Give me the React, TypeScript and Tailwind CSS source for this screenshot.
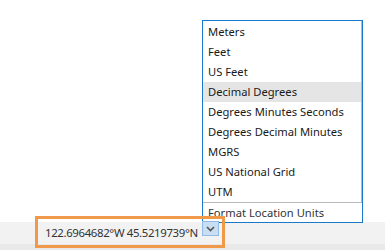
import React from "react";

const items = [
  "Meters",
  "Feet",
  "US Feet",
  "Decimal Degrees",
  "Degrees Minutes Seconds",
  "Degrees Decimal Minutes",
  "MGRS",
  "US National Grid",
  "UTM",
];

export default function App() {
  return (
    <div className="relative w-[385px] h-[250px] overflow-hidden bg-white flex flex-col font-['Noto_Sans',sans-serif]">
      <div className="flex-1" />
      <div className="relative h-[28px] bg-[#f2f2f2] border-b-[6px] border-[#e9e9e9] flex items-start pl-[35px]">
        <div className="relative z-10 -mt-[6px] h-[32px] w-[190px] border-[3px] border-[#f0994a] flex items-start">
          <span className="mt-[5px] pl-[7px] text-[11.4px] tracking-[-0.35px] leading-[18px] text-[#333] whitespace-nowrap">
            122.6964682°W 45.5219739°N
          </span>
          <div className="ml-auto shrink-0 mr-[3px] mt-[2px] h-[15px] w-[17px] border border-[#8fbbe6] bg-[#c9def3] flex items-center justify-center">
            <svg width="9" height="6" viewBox="0 0 9 6">
              <path d="M1 1 L4.5 4.5 L8 1" stroke="#555" strokeWidth="1.6" fill="none" />
            </svg>
          </div>
        </div>
      </div>
      <div className="absolute left-[202px] top-[20px] w-[161px] border border-[#1979ca] bg-white text-[11.2px] text-[#1a1a1a]">
        <div className="pt-[1px] border-r border-b border-[#b9b9b9]">
          {items.map((t) => (
            <div
              key={t}
              className={
                "h-[20px] leading-[20px] pl-[5px] whitespace-nowrap " +
                (t === "Decimal Degrees" ? "bg-[#e5e5e5]" : "")
              }
            >
              {t}
            </div>
          ))}
        </div>
        <div className="h-[19px] leading-[19px] pl-[5px] whitespace-nowrap text-[#333]">
          Format Location Units
        </div>
      </div>
    </div>
  );
}
